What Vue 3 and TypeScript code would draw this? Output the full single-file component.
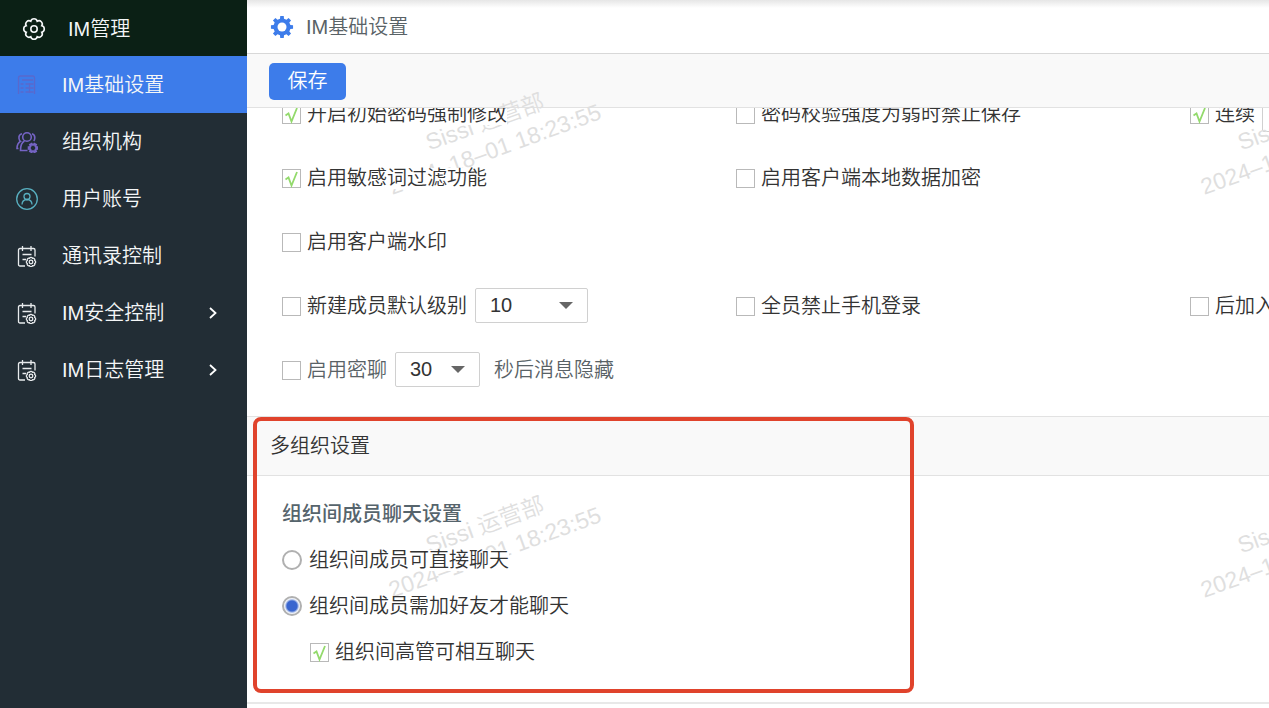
<script setup lang="ts">
import { ref } from 'vue'

type IconName = 'sheet' | 'group' | 'user' | 'plan'

interface MenuItem {
  id: string
  label: string
  icon: IconName
  expandable?: boolean
}

const menu: MenuItem[] = [
  { id: 'base', label: 'IM基础设置', icon: 'sheet' },
  { id: 'org', label: '组织机构', icon: 'group' },
  { id: 'account', label: '用户账号', icon: 'user' },
  { id: 'contacts', label: '通讯录控制', icon: 'plan' },
  { id: 'security', label: 'IM安全控制', icon: 'plan', expandable: true },
  { id: 'logs', label: 'IM日志管理', icon: 'plan', expandable: true },
]
const activeId = ref('base')

interface Option {
  id: string
  label: string
  checked: boolean
  muted?: boolean
  select?: { value: string; choices: string[]; wide?: boolean; name: string }
  field?: { value: string; name: string }
  suffix?: string
}

const rows = ref<Option[][]>([
  [
    { id: 'force-change', label: '开启初始密码强制修改', checked: true },
    { id: 'weak-block', label: '密码校验强度为弱时禁止保存', checked: false },
    { id: 'streak', label: '连续', checked: true, field: { value: '', name: '连续次数' } },
  ],
  [
    { id: 'sensitive', label: '启用敏感词过滤功能', checked: true },
    { id: 'encrypt', label: '启用客户端本地数据加密', checked: false },
  ],
  [{ id: 'client-mark', label: '启用客户端水印', checked: false }],
  [
    {
      id: 'level',
      label: '新建成员默认级别',
      checked: false,
      select: { value: '10', choices: ['10', '20', '30'], wide: true, name: '默认级别' },
    },
    { id: 'no-mobile', label: '全员禁止手机登录', checked: false },
    { id: 'join-later', label: '后加入', checked: false },
  ],
  [
    {
      id: 'secret',
      label: '启用密聊',
      checked: false,
      muted: true,
      select: { value: '30', choices: ['10', '30', '60'], name: '隐藏秒数' },
      suffix: '秒后消息隐藏',
    },
  ],
])

const chatMode = ref('friend')
const executives = ref(true)

function polar(r: number, a: number, cx: number, cy: number): string {
  return `${(cx + r * Math.cos(a)).toFixed(2)} ${(cy + r * Math.sin(a)).toFixed(2)}`
}

function scallop(lobes: number, r: number, arc: number, cx: number, cy: number): string {
  const step = (Math.PI * 2) / lobes
  let d = `M${polar(r, step / 2, cx, cy)}`
  for (let i = 1; i <= lobes; i++) {
    d += `A${arc} ${arc} 0 0 1 ${polar(r, step * (i + 0.5), cx, cy)}`
  }
  return d + 'Z'
}

function cog(teeth: number, outer: number, inner: number, c: number): string {
  const step = (Math.PI * 2) / teeth
  const pts: string[] = []
  for (let i = 0; i < teeth; i++) {
    const a = i * step
    pts.push(polar(inner, a - step * 0.3, c, c), polar(outer, a - step * 0.2, c, c))
    pts.push(polar(outer, a + step * 0.2, c, c), polar(inner, a + step * 0.3, c, c))
  }
  return `M${pts.join('L')}Z`
}

const outlineGear = scallop(8, 8.4, 3.3, 12, 12)
const solidGear = cog(8, 11.2, 8.6, 12)
const smallGear = scallop(8, 4, 1.7, 15, 17)
const groupGear = cog(6, 4.4, 3.2, 17)
const tick = 'M3.500 10.500L6.500 8.500L9.500 16.500L15 3'
</script>

<template>
  <div class="app">
    <aside class="sidebar">
      <div class="brand">
        <svg class="brand-icon" viewBox="0 0 24 24" aria-hidden="true">
          <path :d="outlineGear" />
          <circle cx="12" cy="12" r="3.200" />
        </svg>
        <span>IM管理</span>
      </div>
      <nav>
        <a
          v-for="item in menu"
          :key="item.id"
          href="#"
          class="menu-item"
          :class="{ active: item.id === activeId }"
          @click.prevent="activeId = item.id"
        >
          <svg class="menu-icon" :class="item.icon" viewBox="0 0 22 22" aria-hidden="true">
            <template v-if="item.icon === 'sheet'">
              <path d="M2.500 20V4Q2.500 2 4.500 2H17Q18.500 2 18.500 4V20" />
              <path d="M6 6h11M4.500 10h3M4.500 14h3M4.500 18h3M9.500 10h8M9.500 14h8M9.500 18h8M13.500 9v10" />
            </template>
            <template v-else-if="item.icon === 'group'">
              <circle cx="11" cy="6" r="4.300" />
              <path d="M8.500 10Q4.500 12 4.500 19.500H11.500" />
              <path d="M6 2.700Q2.500 3.500 3 7.500Q3.300 9.500 4.500 10.300Q1 12.500 1 17.500H2.500" />
              <path d="M16 2.700Q19 3.500 18.800 7Q18.700 9 17.700 10" />
              <path :d="groupGear" class="heavy" />
            </template>
            <template v-else-if="item.icon === 'user'">
              <circle cx="11" cy="11" r="10.300" />
              <circle cx="11" cy="8.500" r="3" />
              <path d="M6 16.500Q6.200 11.700 11 11.500Q15.800 11.700 16 16.500" />
            </template>
            <template v-else>
              <path d="M9 21H4Q2.500 21 2.500 19.500V5Q2.500 3.500 4 3.500H17.500Q19 3.500 19 5V11.500" />
              <path d="M6.500 1v5M15 1v5M6.500 9.500h9M6.500 14.500h3.500" />
              <path :d="smallGear" />
              <circle cx="15" cy="17" r="1.800" />
            </template>
          </svg>
          <span class="menu-label">{{ item.label }}</span>
          <svg v-if="item.expandable" class="chevron" viewBox="0 0 8 12" aria-hidden="true">
            <path d="M1 1l5.500 5L1 11" />
          </svg>
        </a>
      </nav>
    </aside>

    <main class="main">
      <header class="page-head">
        <svg class="page-icon" viewBox="0 0 24 24" aria-hidden="true">
          <path :d="solidGear" />
          <circle cx="12" cy="12" r="4.500" />
        </svg>
        <h1>IM基础设置</h1>
      </header>
      <div class="toolbar">
        <button type="button" class="save">保存</button>
      </div>

      <div class="scroller">
        <section class="options">
          <div v-for="(row, r) in rows" :key="r" class="option-row">
            <div v-for="opt in row" :key="opt.id" class="option" :class="{ muted: opt.muted }">
              <label class="choice">
                <span class="box">
                  <input v-model="opt.checked" type="checkbox" />
                  <svg v-if="opt.checked" viewBox="0 0 19 19" aria-hidden="true">
                    <path :d="tick" />
                  </svg>
                </span>
                <span>{{ opt.label }}</span>
              </label>
              <span v-if="opt.select" class="picker" :class="{ wide: opt.select.wide }">
                <select v-model="opt.select.value" :aria-label="opt.select.name">
                  <option v-for="c in opt.select.choices" :key="c">{{ c }}</option>
                </select>
                <svg viewBox="0 0 14 7" aria-hidden="true"><path d="M0 0H14L7 7Z" /></svg>
              </span>
              <input
                v-if="opt.field"
                v-model="opt.field.value"
                class="field"
                type="text"
                :aria-label="opt.field.name"
              />
              <span v-if="opt.suffix" class="suffix">{{ opt.suffix }}</span>
            </div>
          </div>
        </section>

        <section class="orgs">
          <h2>多组织设置</h2>
          <div class="orgs-body" role="radiogroup" aria-labelledby="chat-title">
            <h3 id="chat-title">组织间成员聊天设置</h3>
            <div class="line">
              <label class="choice radio">
                <input v-model="chatMode" type="radio" name="chat" value="direct" />
                <span>组织间成员可直接聊天</span>
              </label>
            </div>
            <div class="line">
              <label class="choice radio">
                <input v-model="chatMode" type="radio" name="chat" value="friend" />
                <span>组织间成员需加好友才能聊天</span>
              </label>
            </div>
            <div class="line nested">
              <label class="choice">
                <span class="box">
                  <input v-model="executives" type="checkbox" />
                  <svg v-if="executives" viewBox="0 0 19 19" aria-hidden="true">
                    <path :d="tick" />
                  </svg>
                </span>
                <span>组织间高管可相互聊天</span>
              </label>
            </div>
          </div>
          <div class="highlight"></div>
        </section>
      </div>

      <div class="watermark" aria-hidden="true">
        <div v-for="n in 4" :key="n" class="mark">
          <p>Sissi 运营部<br />2024–18–01 18:23:55</p>
        </div>
      </div>
    </main>
  </div>
</template>

<style>
html,
body {
  margin: 0;
  height: 100%;
  overflow: hidden;
}
#app {
  height: 100%;
}
</style>

<style scoped>
* {
  box-sizing: border-box;
}
.app {
  display: flex;
  height: 100%;
  background: #fff;
  color: #333;
  font: 350 20px/24px 'Liberation Sans', 'Noto Sans CJK SC', sans-serif;
}
svg {
  display: block;
  flex: none;
  fill: none;
}
h1,
h2,
h3,
p {
  margin: 0;
  font-size: 20px;
  font-weight: inherit;
}

.sidebar {
  flex: none;
  width: 247px;
  background: #222d35;
  color: #f4f6f7;
}
.brand {
  display: flex;
  align-items: center;
  gap: 22px;
  height: 56px;
  padding: 2px 22px 0;
  background: #0b2015;
}
.brand-icon {
  width: 24px;
  height: 24px;
  stroke: #f4f6f7;
  stroke-width: 1.6;
}
.menu-item {
  display: flex;
  align-items: center;
  height: 57px;
  padding: 0 30px 0 16px;
  color: inherit;
  text-decoration: none;
}
.menu-item.active {
  background: #3d7cea;
}
.menu-icon {
  width: 22px;
  height: 22px;
  margin-right: 24px;
  stroke: #e8ebed;
  stroke-width: 1.3;
}
.menu-icon.sheet {
  stroke: #5a68cc;
}
.menu-icon.group {
  stroke: #7564c4;
  stroke-width: 1.6;
}
.heavy {
  stroke-width: 2;
}
.menu-icon.user {
  stroke: #58afc0;
}
.menu-label {
  flex: 1;
}
.chevron {
  width: 8px;
  height: 12px;
  stroke: #fff;
  stroke-width: 1.8;
}

.main {
  position: relative;
  display: flex;
  flex: 1;
  flex-direction: column;
  min-width: 0;
  overflow: hidden;
}
.page-head {
  display: flex;
  flex: none;
  align-items: center;
  gap: 12px;
  height: 54px;
  padding: 0 23px;
  border-bottom: 1px solid #d8d8d8;
  background: linear-gradient(#e6e6e6, #fff 8px);
  color: #596266;
}
.page-icon {
  width: 24px;
  height: 24px;
  fill: #3d7cea;
}
.page-icon circle {
  fill: #fff;
}
.toolbar {
  display: flex;
  flex: none;
  align-items: center;
  height: 54px;
  padding: 1px 22px 0;
  border-bottom: 1px solid #e2e2e2;
  background: #f9f9f9;
}
.save {
  width: 77px;
  height: 37px;
  padding: 0;
  border: 0;
  border-radius: 5px;
  background: #3d7cea;
  color: #fff;
  font: inherit;
}

.scroller {
  flex: 1;
  min-height: 0;
  overflow: hidden;
  background: #fff;
}
.options {
  margin-top: -26px;
  padding: 0 0 14px 35px;
}
.option-row {
  display: grid;
  grid-template-columns: repeat(3, 454px);
  align-items: center;
  height: 64px;
}
.option {
  display: flex;
  align-items: center;
  white-space: nowrap;
}
.choice {
  position: relative;
  z-index: 2;
  display: flex;
  align-items: center;
  gap: 6px;
  background: #fff;
  line-height: 21px;
  white-space: nowrap;
}
.choice.radio {
  gap: 7px;
}
.muted {
  color: #596266;
}
.box {
  display: grid;
  width: 19px;
  height: 19px;
}
.box > * {
  grid-area: 1 / 1;
}
.box svg {
  z-index: 1;
  width: 19px;
  height: 19px;
  pointer-events: none;
  stroke: #93da6c;
  stroke-width: 1.8;
}
.box input {
  width: 19px;
  height: 19px;
  margin: 0;
  appearance: none;
  border: 1px solid #b9b9b9;
  background: #fff;
}
.radio input {
  width: 20px;
  height: 20px;
  margin: 0;
  appearance: none;
  border: 2px solid #b0b0b0;
  border-radius: 50%;
  background: #fff;
}
.radio input:checked {
  background: radial-gradient(circle, #3a66cf 5px, #dfe6f5 7px, #fff 8px);
}
.picker {
  display: grid;
  align-items: center;
  width: 85px;
  height: 35px;
  margin: 0 14px 2px 8px;
}
.picker.wide {
  width: 113px;
}
.picker > * {
  grid-area: 1 / 1;
}
.picker svg {
  justify-self: end;
  width: 14px;
  height: 7px;
  margin-right: 15px;
  fill: #666;
  pointer-events: none;
}
.picker select {
  width: 100%;
  height: 35px;
  padding: 0 14px;
  appearance: none;
  border: 1px solid #d0d0d0;
  border-radius: 2px;
  background: #fff;
  color: #333;
  font: inherit;
}
.field {
  width: 60px;
  height: 35px;
  margin-left: 7px;
  border: 1px solid #d0d0d0;
  border-radius: 2px;
  font: inherit;
}

.orgs {
  position: relative;
  border-bottom: 2px solid #e8e8e8;
}
.orgs h2 {
  height: 60px;
  padding: 0 23px;
  border: solid #e2e2e2;
  border-width: 1px 0;
  background: #f9f9f9;
  line-height: 58px;
}
.orgs-body {
  padding: 15px 0 27px 35px;
}
.orgs h3 {
  height: 46px;
  color: #56646c;
  font-weight: 500;
  line-height: 46px;
}
.line {
  display: flex;
  align-items: center;
  height: 46px;
}
.nested {
  padding-left: 28px;
}
.highlight {
  position: absolute;
  top: 1px;
  bottom: 9px;
  left: 6px;
  z-index: 3;
  width: 661px;
  border: 4px solid #e0432c;
  border-radius: 8px;
  pointer-events: none;
}

.watermark {
  position: absolute;
  inset: 0;
  z-index: 1;
  display: grid;
  grid-template-columns: repeat(2, 812px);
  grid-auto-rows: 403px;
  overflow: hidden;
  pointer-events: none;
}
.mark {
  padding: 107px 0 0 131px;
}
.mark p {
  width: 224px;
  color: #dfdfdf;
  font-size: 23px;
  line-height: 29px;
  text-align: center;
  white-space: nowrap;
  transform: rotate(-20deg);
}
</style>
